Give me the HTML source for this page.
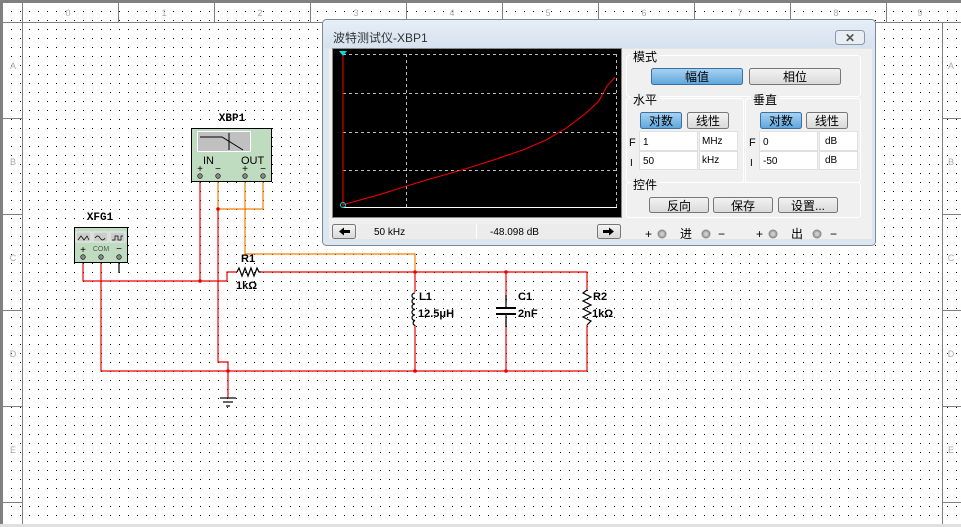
<!DOCTYPE html>
<html><head><meta charset="utf-8"><style>
html,body{margin:0;padding:0;background:#fff;}
svg{display:block;font-family:"Liberation Sans","Noto Sans CJK SC",sans-serif;}
</style></head><body>
<svg width="961" height="527" viewBox="0 0 961 527" xmlns="http://www.w3.org/2000/svg">
<defs>
<pattern id="dots" x="2" y="2" width="9" height="9" patternUnits="userSpaceOnUse"><rect width="1" height="1" fill="#000"/></pattern>
<linearGradient id="btn" x1="0" y1="0" x2="0" y2="1"><stop offset="0" stop-color="#f4f4f4"/><stop offset="1" stop-color="#d8d8d8"/></linearGradient>
<linearGradient id="btnA" x1="0" y1="0" x2="0" y2="1"><stop offset="0" stop-color="#a9d3f2"/><stop offset="1" stop-color="#5ea6dc"/></linearGradient>
<linearGradient id="title" x1="0" y1="0" x2="0" y2="1"><stop offset="0" stop-color="#e6eef7"/><stop offset="1" stop-color="#d6e2ee"/></linearGradient>
</defs>
<rect width="961" height="527" fill="#fff"/>
<rect width="961" height="527" fill="url(#dots)"/>
<rect x="0" y="0" width="961" height="3" fill="#808080"/>
<rect x="0" y="0" width="3" height="527" fill="#808080"/>
<rect x="0" y="524" width="961" height="3" fill="#e0e0e0"/>
<g stroke="#808080" stroke-width="1" fill="none">
<line x1="3" y1="22.5" x2="961" y2="22.5"/>
<line x1="22.5" y1="3" x2="22.5" y2="524"/>
<line x1="942.5" y1="22" x2="942.5" y2="524"/>
<line x1="118.5" y1="3" x2="118.5" y2="22"/><line x1="214.5" y1="3" x2="214.5" y2="22"/><line x1="310.5" y1="3" x2="310.5" y2="22"/><line x1="406.5" y1="3" x2="406.5" y2="22"/><line x1="502.5" y1="3" x2="502.5" y2="22"/><line x1="598.5" y1="3" x2="598.5" y2="22"/><line x1="694.5" y1="3" x2="694.5" y2="22"/><line x1="790.5" y1="3" x2="790.5" y2="22"/><line x1="886.5" y1="3" x2="886.5" y2="22"/>
<line x1="3" y1="118.5" x2="22" y2="118.5"/><line x1="3" y1="214.5" x2="22" y2="214.5"/><line x1="3" y1="310.5" x2="22" y2="310.5"/><line x1="3" y1="406.5" x2="22" y2="406.5"/><line x1="3" y1="502.5" x2="22" y2="502.5"/>
<line x1="943" y1="118.5" x2="961" y2="118.5"/><line x1="943" y1="214.5" x2="961" y2="214.5"/><line x1="943" y1="310.5" x2="961" y2="310.5"/><line x1="943" y1="406.5" x2="961" y2="406.5"/><line x1="943" y1="502.5" x2="961" y2="502.5"/>
</g>
<g fill="#aaa" font-size="9" text-anchor="middle">
<text x="68" y="16">0</text><text x="164" y="16">1</text><text x="260" y="16">2</text><text x="356" y="16">3</text><text x="452" y="16">4</text><text x="548" y="16">5</text><text x="644" y="16">6</text><text x="740" y="16">7</text><text x="836" y="16">8</text><text x="920" y="16">9</text>
<text x="13" y="69">A</text><text x="13" y="165">B</text><text x="13" y="261">C</text><text x="13" y="357">D</text><text x="13" y="453">E</text>
<text x="951" y="69">A</text><text x="951" y="165">B</text><text x="951" y="261">C</text><text x="951" y="357">D</text><text x="951" y="453">E</text>
</g>

<g fill="none" stroke-width="1.2">
<polyline stroke="#f08000" points="218,176 218,209 263,209 263,176"/>
<polyline stroke="#f08000" points="245,176 245,254 415,254 415,272"/>
<polyline stroke="#e00" points="200,176 200,281"/>
<polyline stroke="#e00" points="83,257 83,281 227,281 227,272 237,272"/>
<polyline stroke="#e00" points="261,272 587,272 587,290"/>
<polyline stroke="#e00" points="587,325 587,371 101,371 101,257"/>
<polyline stroke="#e00" points="218,209 218,362 228,362 228,398"/>
<polyline stroke="#e00" points="415,272 415,292"/><polyline stroke="#e00" points="415,325 415,371"/>
<polyline stroke="#e00" points="506,272 506,303"/><polyline stroke="#e00" points="506,319 506,371"/>
</g>
<g fill="none" stroke="#000" stroke-width="1.2">
<line x1="119" y1="257" x2="119" y2="273"/>
<polyline points="237,272 239,268 242,276 245,268 248,276 251,268 254,276 257,268 259,272 261,272"/>
<polyline points="587,290 583,293 591,297 583,301 591,305 583,309 591,313 583,317 591,321 587,325"/>
<path d="M415,293 a3,2.7 0 0 0 0,5.5 a3,2.7 0 0 0 0,5.5 a3,2.7 0 0 0 0,5.5 a3,2.7 0 0 0 0,5.5 a3,2.7 0 0 0 0,5.5 a3,2.7 0 0 0 0,5"/>
<line x1="506" y1="295" x2="506" y2="308"/><line x1="506" y1="314" x2="506" y2="327"/>
<line x1="496" y1="308" x2="516" y2="308" stroke-width="2"/><line x1="496" y1="314" x2="516" y2="314" stroke-width="2"/>
<line x1="220" y1="398" x2="236" y2="398"/><line x1="223" y1="402" x2="233" y2="402"/><line x1="226" y1="406" x2="230" y2="406"/>
</g>
<g fill="#e00"><circle cx="415" cy="272" r="1.8"/><circle cx="506" cy="272" r="1.8"/><circle cx="415" cy="371" r="1.8"/><circle cx="506" cy="371" r="1.8"/><circle cx="228" cy="371" r="1.8"/><circle cx="200" cy="281" r="1.8"/><circle cx="218" cy="209" r="1.8"/></g>
<g font-size="11" font-weight="bold" fill="#000">
<text x="241" y="262">R1</text><text x="236" y="289">1kΩ</text>
<text x="419" y="300">L1</text><text x="418" y="317">12.5μH</text>
<text x="518" y="300">C1</text><text x="518" y="317">2nF</text>
<text x="593" y="300">R2</text><text x="592" y="317">1kΩ</text>
</g>

<text x="232" y="121" font-family="Liberation Mono,monospace" font-weight="bold" font-size="11" text-anchor="middle">XBP1</text>
<rect x="191.5" y="128.5" width="80" height="53" fill="#c0dcc0" stroke="#000"/>
<rect x="197.5" y="131.5" width="53" height="20" fill="#c0c0c0" stroke="#fff"/>
<polyline points="200,137 222,137 243,150" fill="none" stroke="#000"/><line x1="229" y1="133" x2="229" y2="150" stroke="#000"/>
<g font-size="11" fill="#000"><text x="203" y="164">IN</text><text x="241" y="164">OUT</text></g>
<g font-size="10" fill="#000" text-anchor="middle"><text x="200" y="172">+</text><text x="218" y="172">−</text><text x="245" y="172">+</text><text x="263" y="172">−</text></g>
<g fill="#888" stroke="#000" stroke-width="0.6"><circle cx="200" cy="176" r="2.3"/><circle cx="218" cy="176" r="2.3"/><circle cx="245" cy="176" r="2.3"/><circle cx="263" cy="176" r="2.3"/></g>
<text x="100" y="220" font-family="Liberation Mono,monospace" font-weight="bold" font-size="11" text-anchor="middle">XFG1</text>
<rect x="74.5" y="227.5" width="53" height="35" fill="#c0dcc0" stroke="#000"/>
<rect x="76" y="232" width="15" height="10" fill="#ccc" stroke="#fff" stroke-width="0.6"/><rect x="93" y="232" width="15" height="10" fill="#ccc" stroke="#fff" stroke-width="0.6"/><rect x="110" y="232" width="15" height="10" fill="#ccc" stroke="#fff" stroke-width="0.6"/>
<g fill="none" stroke="#000" stroke-width="0.7"><polyline points="78,240 81,236 84,240 87,236 89,240"/><path d="M95,238 q3,-4 5,0 q3,4 5,0"/><polyline points="112,240 115,240 115,236 118,236 118,240 121,240 121,236 123,236"/></g>
<text x="83" y="253" font-size="10" text-anchor="middle">+</text><text x="101" y="251" font-size="7" fill="#555" text-anchor="middle">COM</text><text x="119" y="252" font-size="10" text-anchor="middle">−</text>
<g fill="#888" stroke="#000" stroke-width="0.6"><circle cx="83" cy="257" r="2.3"/><circle cx="101" cy="257" r="2.3"/><circle cx="119" cy="257" r="2.3"/></g>

<rect x="322.5" y="19.5" width="553" height="226" rx="4" fill="#dce6f0" stroke="#7a8a9a"/>
<rect x="323" y="20" width="552" height="28" rx="4" fill="url(#title)"/>
<text x="333" y="42" font-size="12" fill="#333">波特测试仪-XBP1</text>
<rect x="835.5" y="30.5" width="29" height="14" rx="3" fill="#e8eef4" stroke="#8a98a8"/>
<text x="850" y="42" font-size="12" font-weight="bold" fill="#555" text-anchor="middle">✕</text>
<rect x="329" y="49" width="297" height="190" fill="#f0f0f0"/>
<rect x="626" y="49" width="246" height="190" fill="#f0f0f0"/>
<rect x="332.5" y="48.5" width="289" height="169" fill="#000" stroke="#888"/>
<g stroke="#bbb" stroke-dasharray="3,3" stroke-width="1">
<line x1="343" y1="54.5" x2="617" y2="54.5"/><line x1="343" y1="93.5" x2="617" y2="93.5"/><line x1="343" y1="132.5" x2="617" y2="132.5"/><line x1="343" y1="170.5" x2="617" y2="170.5"/>
<line x1="406.5" y1="54" x2="406.5" y2="207"/><line x1="616.5" y1="54" x2="616.5" y2="207"/>
</g>
<line x1="343" y1="207.5" x2="617" y2="207.5" stroke="#fff"/>
<line x1="343" y1="53" x2="343" y2="207" stroke="#f00"/>
<polyline points="343,204.7 360,200 380,194.5 405.7,186.3 430,179 462.9,169.7 495,159.5 523.6,149.7 546,140 566.4,128 585,114 598.6,101.3 607,86 615,77.3" fill="none" stroke="#f00" stroke-width="1"/>
<circle cx="343" cy="205" r="2.5" fill="none" stroke="#0dd"/>
<path d="M339,51 h8 l-4,5z" fill="#0dd"/>
<g fill="none" stroke="#fff" stroke-width="1"><rect x="626.5" y="55.5" width="234" height="41" rx="3"/><rect x="626.5" y="98.5" width="117" height="84" rx="3"/><rect x="745.5" y="98.5" width="115" height="84" rx="3"/><rect x="626.5" y="182.5" width="234" height="35" rx="3"/></g>
<g font-size="12" fill="#000"><rect x="631" y="49" width="28" height="14" fill="#f0f0f0"/><text x="633" y="61">模式</text>
<rect x="631" y="92" width="28" height="14" fill="#f0f0f0"/><text x="633" y="104">水平</text>
<rect x="751" y="92" width="28" height="14" fill="#f0f0f0"/><text x="753" y="104">垂直</text>
<rect x="631" y="176" width="28" height="14" fill="#f0f0f0"/><text x="633" y="189">控件</text></g>
<g stroke="#777" stroke-width="1">
<rect x="651.5" y="68.5" width="91" height="16" rx="2" fill="url(#btnA)" stroke="#3a6fa0"/>
<rect x="749.5" y="68.5" width="91" height="16" rx="2" fill="url(#btn)"/>
<rect x="640.5" y="112.5" width="41" height="16" rx="2" fill="url(#btnA)" stroke="#3a6fa0"/>
<rect x="687.5" y="112.5" width="41" height="16" rx="2" fill="url(#btn)"/>
<rect x="760.5" y="112.5" width="41" height="16" rx="2" fill="url(#btnA)" stroke="#3a6fa0"/>
<rect x="806.5" y="112.5" width="41" height="16" rx="2" fill="url(#btn)"/>
<rect x="649.5" y="197.5" width="59" height="15" rx="2" fill="url(#btn)"/>
<rect x="713.5" y="197.5" width="59" height="15" rx="2" fill="url(#btn)"/>
<rect x="778.5" y="197.5" width="59" height="15" rx="2" fill="url(#btn)"/>
</g>
<g font-size="12" fill="#000" text-anchor="middle">
<text x="697" y="81">幅值</text><text x="795" y="81">相位</text>
<text x="661" y="125">对数</text><text x="708" y="125">线性</text><text x="781" y="125">对数</text><text x="827" y="125">线性</text>
<text x="679" y="210">反向</text><text x="743" y="210">保存</text><text x="808" y="210">设置...</text>
</g>
<g fill="#fff" stroke="#e0e0e0"><rect x="639.5" y="131.5" width="58" height="19"/><rect x="699.5" y="131.5" width="38" height="19"/><rect x="639.5" y="151.5" width="58" height="18"/><rect x="699.5" y="151.5" width="38" height="18"/>
<rect x="759.5" y="131.5" width="58" height="19"/><rect x="819.5" y="131.5" width="38" height="19"/><rect x="759.5" y="151.5" width="58" height="18"/><rect x="819.5" y="151.5" width="38" height="18"/></g>
<g font-size="10" fill="#000">
<text x="629" y="146" font-size="11">F</text><text x="630" y="166">I</text><text x="749" y="146" font-size="11">F</text><text x="750" y="166">I</text>
<text x="643" y="145">1</text><text x="702" y="144">MHz</text><text x="643" y="164">50</text><text x="702" y="163">kHz</text>
<text x="763" y="145">0</text><text x="825" y="144">dB</text><text x="763" y="164">-50</text><text x="825" y="163">dB</text>
</g>
<rect x="332.5" y="224.5" width="23" height="14" rx="2" fill="url(#btn)" stroke="#777"/>
<rect x="597.5" y="224.5" width="23" height="14" rx="2" fill="url(#btn)" stroke="#777"/>
<path d="M339,231.5 l5,-4 v2.5 h6 v3 h-6 v2.5z" fill="#000"/>
<path d="M614,231.5 l-5,-4 v2.5 h-6 v3 h6 v2.5z" fill="#000"/>
<rect x="358" y="224" width="239" height="15" fill="#ececec"/>
<line x1="476.5" y1="224" x2="476.5" y2="239" stroke="#fff"/>
<g font-size="10" fill="#000"><text x="374" y="235">50 kHz</text><text x="490" y="235">-48.098 dB</text></g>
<g font-size="12" fill="#000">
<text x="645" y="238">+</text><text x="680" y="238">进</text><text x="718" y="238">−</text>
<text x="756" y="238">+</text><text x="791" y="238">出</text><text x="830" y="238">−</text>
</g>
<g fill="#aaa" stroke="#888"><circle cx="662" cy="234" r="4"/><circle cx="706" cy="234" r="4"/><circle cx="773" cy="234" r="4"/><circle cx="817" cy="234" r="4"/></g>
<g fill="#ccc"><circle cx="662" cy="234" r="2"/><circle cx="706" cy="234" r="2"/><circle cx="773" cy="234" r="2"/><circle cx="817" cy="234" r="2"/></g>
</svg>
</body></html>
